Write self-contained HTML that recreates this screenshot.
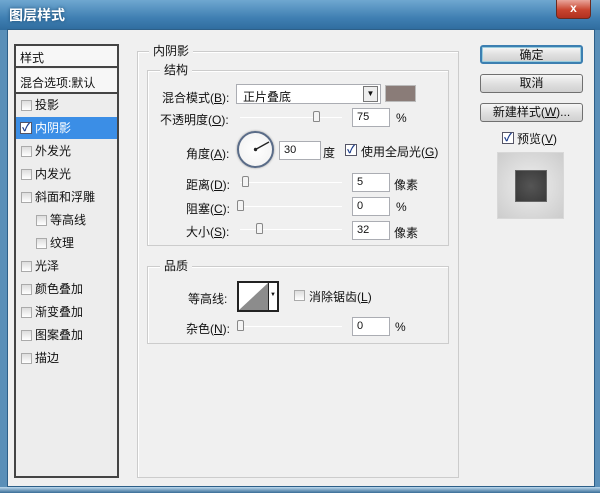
<!DOCTYPE html>
<html><head><meta charset="utf-8"><style>
*{margin:0;padding:0;box-sizing:border-box}
body{width:600px;height:493px;overflow:hidden;background:#5a8fb8;font-family:"Liberation Sans","Noto Sans CJK SC",sans-serif;font-size:12px;color:#111;position:relative}
.a{position:absolute}
.title{left:0;top:0;width:600px;height:30px;background:linear-gradient(#6fa7d0,#3f7fb2 60%,#2f6c9e);}
.client{left:7px;top:29px;width:588px;height:458px;background:#f0f0f0;border:1px solid #2d5f88}
.bottom{left:0;top:487px;width:600px;height:6px;background:linear-gradient(#bcd9ee,#3a6d96)}
.t{white-space:nowrap}
.row{left:16px;width:101px;height:23px;border-bottom:1px solid #fff;}
.cb{width:11px;height:11px;border:1px solid #aaa;background:linear-gradient(#ddd,#fff)}
.grp{border:1px solid #ccc;box-shadow:1px 1px 0 #fff inset}
.lbl{background:#f0f0f0;padding:0 4px}
.inp{background:#fff;border:1px solid #abadb3;height:19px;font-size:11px;padding:2px 4px}
.sl{height:1px;background:#bbb;border-bottom:1px solid #fff}
.th{width:7px;height:11px;border:1px solid #888;border-radius:2px 2px 1px 1px;background:#f4f4f4}
.btn{left:480px;width:103px;height:19px;border:1px solid #707070;border-radius:3px;background:linear-gradient(#f6f6f6,#e0e0e0 50%,#d0d0d0);text-align:center;line-height:17px}
</style></head><body>
<div class="a title"></div>
<div class="a t" style="left:9px;top:5px;color:#fff;font-weight:bold;font-size:14px;text-shadow:0 0 3px #1c4a70">图层样式</div>
<div class="a" style="left:556px;top:0;width:35px;height:19px;background:linear-gradient(#e9a69b,#c8442f 55%,#b03020);border:1px solid #6a2a20;border-top:none;border-radius:0 0 4px 4px;color:#fff;text-align:center;font-weight:bold;line-height:17px">x</div>
<div class="a client"></div>
<div class="a bottom"></div>

<!-- left list -->
<div class="a" style="left:14px;top:44px;width:105px;height:434px;border:2px solid #444;background:#ededed"></div>
<div class="a" style="left:16px;top:46px;width:101px;height:22px;border-bottom:2px solid #444;background:#f7f7f7"></div>
<div class="a t" style="left:20px;top:49px">样式</div>
<div class="a" style="left:16px;top:69px;width:101px;height:25px;border-bottom:2px solid #444;background:#f7f7f7"></div>
<div class="a t" style="left:20px;top:74px">混合选项:默认</div>
<div class="a" style="left:16px;top:117px;width:101px;height:22px;background:#3b8ee6"></div>

<div class="a cb" style="left:21px;top:100px"></div><div class="a t" style="left:35px;top:96px">投影</div>
<div class="a" style="left:20px;top:122px;width:12px;height:12px;background:#fff;border:1px solid #556;color:#1c3d8c;font-size:11px;line-height:10px;text-align:center;font-weight:bold">✓</div><div class="a t" style="left:35px;top:119px;color:#fff">内阴影</div>
<div class="a cb" style="left:21px;top:146px"></div><div class="a t" style="left:35px;top:142px">外发光</div>
<div class="a cb" style="left:21px;top:169px"></div><div class="a t" style="left:35px;top:165px">内发光</div>
<div class="a cb" style="left:21px;top:192px"></div><div class="a t" style="left:35px;top:188px">斜面和浮雕</div>
<div class="a cb" style="left:36px;top:215px"></div><div class="a t" style="left:50px;top:211px">等高线</div>
<div class="a cb" style="left:36px;top:238px"></div><div class="a t" style="left:50px;top:234px">纹理</div>
<div class="a cb" style="left:21px;top:261px"></div><div class="a t" style="left:35px;top:257px">光泽</div>
<div class="a cb" style="left:21px;top:284px"></div><div class="a t" style="left:35px;top:280px">颜色叠加</div>
<div class="a cb" style="left:21px;top:307px"></div><div class="a t" style="left:35px;top:303px">渐变叠加</div>
<div class="a cb" style="left:21px;top:330px"></div><div class="a t" style="left:35px;top:326px">图案叠加</div>
<div class="a cb" style="left:21px;top:353px"></div><div class="a t" style="left:35px;top:349px">描边</div>

<!-- main group -->
<div class="a grp" style="left:137px;top:51px;width:322px;height:427px"></div>
<div class="a t lbl" style="left:149px;top:42px">内阴影</div>
<div class="a grp" style="left:147px;top:70px;width:302px;height:176px"></div>
<div class="a t lbl" style="left:160px;top:61px">结构</div>

<div class="a t" style="left:162px;top:89px">混合模式(<u>B</u>):</div>
<div class="a" style="left:236px;top:84px;width:145px;height:20px;background:#fff;border:1px solid #abadb3"></div>
<div class="a t" style="left:243px;top:88px">正片叠底</div>
<div class="a" style="left:363px;top:86px;width:15px;height:16px;border:1px solid #777;background:#eee;font-size:8px;text-align:center;line-height:14px">▼</div>
<div class="a" style="left:385px;top:85px;width:31px;height:17px;background:#8a7c78;border:1px solid #bbb"></div>

<div class="a t" style="left:160px;top:111px">不透明度(<u>O</u>):</div>
<div class="a sl" style="left:240px;top:117px;width:102px"></div>
<div class="a th" style="left:313px;top:111px"></div>
<div class="a inp" style="left:352px;top:108px;width:38px">75</div>
<div class="a t" style="left:396px;top:111px">%</div>

<div class="a t" style="left:186px;top:145px">角度(<u>A</u>):</div>
<div class="a" style="left:237px;top:131px;width:37px;height:37px;border-radius:50%;border:2px solid #5a6c88;background:radial-gradient(#fff,#f0f0f0);box-shadow:0 0 2px #999"></div>
<svg class="a" style="left:237px;top:131px" width="37" height="37"><line x1="18.5" y1="18.5" x2="32" y2="11" stroke="#222" stroke-width="1.3"/><circle cx="18.5" cy="18.5" r="1.7" fill="#222"/></svg>
<div class="a inp" style="left:279px;top:141px;width:42px">30</div>
<div class="a t" style="left:323px;top:144px">度</div>
<div class="a" style="left:345px;top:144px;width:12px;height:12px;background:#fff;border:1px solid #556;color:#1c3d8c;font-size:11px;line-height:10px;text-align:center;font-weight:bold">✓</div>
<div class="a t" style="left:361px;top:143px">使用全局光(<u>G</u>)</div>

<div class="a t" style="left:186px;top:176px">距离(<u>D</u>):</div>
<div class="a sl" style="left:240px;top:182px;width:102px"></div>
<div class="a th" style="left:242px;top:176px"></div>
<div class="a inp" style="left:352px;top:173px;width:38px">5</div>
<div class="a t" style="left:394px;top:176px">像素</div>

<div class="a t" style="left:186px;top:200px">阻塞(<u>C</u>):</div>
<div class="a sl" style="left:238px;top:206px;width:104px"></div>
<div class="a th" style="left:237px;top:200px"></div>
<div class="a inp" style="left:352px;top:197px;width:38px">0</div>
<div class="a t" style="left:396px;top:200px">%</div>

<div class="a t" style="left:186px;top:223px">大小(<u>S</u>):</div>
<div class="a sl" style="left:240px;top:229px;width:102px"></div>
<div class="a th" style="left:256px;top:223px"></div>
<div class="a inp" style="left:352px;top:221px;width:38px">32</div>
<div class="a t" style="left:394px;top:224px">像素</div>

<!-- quality -->
<div class="a grp" style="left:147px;top:266px;width:302px;height:78px"></div>
<div class="a t lbl" style="left:160px;top:257px">品质</div>
<div class="a t" style="left:188px;top:290px">等高线:</div>
<div class="a" style="left:237px;top:281px;width:42px;height:31px;border:2px solid #222;background:#fff"></div>
<svg class="a" style="left:239px;top:283px" width="29" height="27"><polygon points="0,27 29,0 29,27" fill="#8c8c8c"/></svg>
<div class="a" style="left:268px;top:283px;width:9px;height:27px;border-left:1px solid #222;background:#fff;font-size:6px;text-align:center;line-height:24px">▼</div>
<div class="a cb" style="left:294px;top:290px"></div>
<div class="a t" style="left:309px;top:288px">消除锯齿(<u>L</u>)</div>
<div class="a t" style="left:186px;top:320px">杂色(<u>N</u>):</div>
<div class="a sl" style="left:240px;top:326px;width:102px"></div>
<div class="a th" style="left:237px;top:320px"></div>
<div class="a inp" style="left:352px;top:317px;width:38px">0</div>
<div class="a t" style="left:395px;top:320px">%</div>

<!-- buttons -->
<div class="a btn" style="top:45px;border:2px solid #3c7fb1;box-shadow:0 0 0 1px #9cd inset">确定</div>
<div class="a btn" style="top:74px">取消</div>
<div class="a btn" style="top:103px">新建样式(<u>W</u>)...</div>
<div class="a" style="left:502px;top:132px;width:12px;height:12px;background:#fff;border:1px solid #556;color:#1c3d8c;font-size:11px;line-height:10px;text-align:center;font-weight:bold">✓</div>
<div class="a t" style="left:517px;top:130px">预览(<u>V</u>)</div>
<div class="a" style="left:497px;top:152px;width:67px;height:67px;background:radial-gradient(#eee,#ccc);border:1px solid #d8d8d8"></div>
<div class="a" style="left:515px;top:170px;width:32px;height:32px;background:radial-gradient(#555,#3a3a3a);border:1px solid #666"></div>
</body></html>
